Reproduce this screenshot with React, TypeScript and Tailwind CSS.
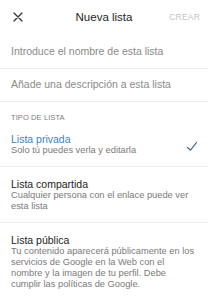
import React from 'react';

const font = { fontFamily: '"Liberation Sans", Arial, sans-serif' };

function CloseIcon() {
  return (
    <svg width="10" height="10" viewBox="0 0 10 10" className="text-[#333]">
      <path d="M1 1L9 9M9 1L1 9" stroke="currentColor" strokeWidth="1.3" strokeLinecap="round" />
    </svg>
  );
}

function CheckIcon() {
  return (
    <svg width="12" height="11" viewBox="0 0 12 11" className="text-[#3e6796]">
      <path d="M1.5 6.5L4.5 9.2L10.5 1.5" fill="none" stroke="currentColor" strokeWidth="1.2" strokeLinecap="round" strokeLinejoin="round" />
    </svg>
  );
}

function Field({ placeholder }: { placeholder: string }) {
  return (
    <div className="h-[33px] border-b border-[#ececec] pl-[11px] pt-[9px]">
      <p className="text-[10.5px] leading-[12px] text-[#8a8a8a]">{placeholder}</p>
    </div>
  );
}

function ListType({
  title,
  description,
  selected = false,
  last = false,
}: {
  title: string;
  description: string;
  selected?: boolean;
  last?: boolean;
}) {
  return (
    <div className={`flex items-center pl-[11px] pr-[10px] pt-[11px] pb-[10px] ${last ? '' : 'border-b border-[#ececec]'}`}>
      <div className="flex-1 min-w-0 pr-[1px]">
        <p className={`text-[10.5px] leading-[12px] ${selected ? 'text-[#3f7fc8]' : 'text-[#222]'}`}>{title}</p>
        <p className="text-[9.3px] leading-[11px] text-[#7a7a7a]">{description}</p>
      </div>
      {selected && (
        <div className="shrink-0 ml-2 mt-[3px]">
          <CheckIcon />
        </div>
      )}
    </div>
  );
}

export default function App() {
  return (
    <div className="w-[208px] h-[300px] bg-white overflow-hidden" style={font}>
      <div className="h-[36px] pb-[3px] grid grid-cols-[1fr_auto_1fr] items-center">
        <div className="pl-[13px] flex items-center">
          <CloseIcon />
        </div>
        <p className="text-[11.5px] leading-[14px] text-[#1e1e1e]">Nueva lista</p>
        <div className="flex justify-end pr-[8px]">
          <span className="text-[8.5px] leading-[10px] tracking-[0.2px] text-[#c4c4c4]">CREAR</span>
        </div>
      </div>

      <Field placeholder="Introduce el nombre de esta lista" />
      <Field placeholder="Añade una descripción a esta lista" />

      <div className="pl-[11px] pt-[11px]">
        <p className="text-[7.5px] leading-[9px] tracking-[0.1px] text-[#7d7d7d]">TIPO DE LISTA</p>
      </div>

      <ListType title="Lista privada" description="Solo tú puedes verla y editarla" selected />
      <ListType title="Lista compartida" description="Cualquier persona con el enlace puede ver esta lista" />
      <ListType
        title="Lista pública"
        description="Tu contenido aparecerá públicamente en los servicios de Google en la Web con el nombre y la imagen de tu perfil. Debe cumplir las políticas de Google."
        last
      />
    </div>
  );
}
